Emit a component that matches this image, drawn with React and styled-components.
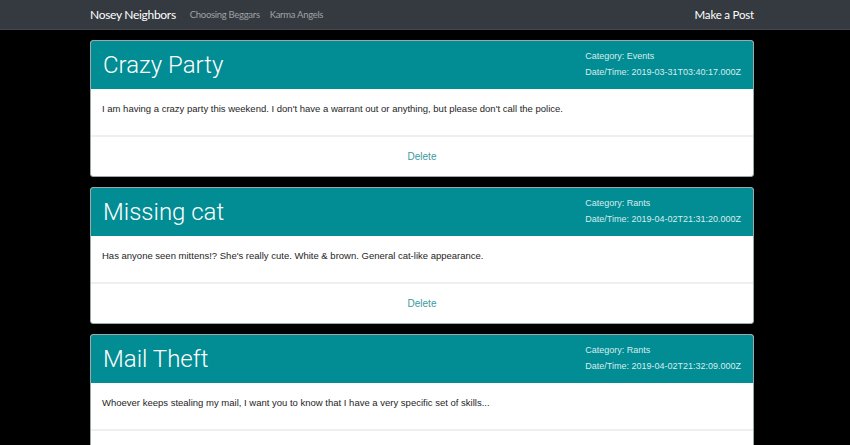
import React from 'react';
import styled, { createGlobalStyle } from 'styled-components';

const GlobalStyle = createGlobalStyle`
  html, body {
    margin: 0;
    padding: 0;
    background: #000;
    font-family: "Liberation Sans", Arial, sans-serif;
  }
`;

const Navbar = styled.nav`
  height: 30px;
  background: #343a40;
  border-bottom: 1px solid #45494f;
  box-sizing: border-box;
`;

const NavInner = styled.div`
  width: 664px;
  margin: 0 96px 0 90px;
  height: 100%;
  display: flex;
  align-items: center;
  font-family: Lato, "Open Sans", sans-serif;
`;

const Brand = styled.a`
  color: #fff;
  font-size: 12px;
  margin-right: 14px;
  letter-spacing: -0.3px;
`;

const NavLink = styled.a`
  color: #9ea2a7;
  font-size: 9.5px;
  margin-right: 10px;
  letter-spacing: -0.3px;
`;

const NavRight = styled.a`
  margin-left: auto;
  color: #fff;
  font-size: 11.5px;
  letter-spacing: -0.2px;
`;

const Container = styled.main`
  width: 664px;
  margin: 0 96px 0 90px;
  padding-top: 10px;
  display: flex;
  flex-direction: column;
  gap: 10px;
`;

const Card = styled.div`
  background: #fff;
  border-radius: 3px;
  overflow: hidden;
  border: 1px solid #9aa;
  box-sizing: border-box;
`;

const CardHeader = styled.div`
  background: #028c93;
  height: 48px;
  display: flex;
  align-items: center;
  justify-content: space-between;
  padding: 0 12px;
`;

const Title = styled.h2`
  margin: 0;
  color: #fff;
  font-weight: 300;
  font-size: 24px;
  font-family: Roboto, "Liberation Sans", sans-serif;
`;

const Meta = styled.div`
  color: #d6eced;
  font-size: 9px;
  line-height: 16px;
  align-self: flex-start;
  padding-top: 7px;
`;

const CardBody = styled.div`
  height: 48px;
  padding: 14px 11px 0;
  box-sizing: border-box;
  font-size: 9.5px;
  color: #1e1e1e;
  border-bottom: 2px solid #efefef;
`;

const CardFooter = styled.div`
  height: 39px;
  display: flex;
  align-items: center;
  justify-content: center;
`;

const DeleteButton = styled.button`
  background: none;
  border: none;
  color: #3a9aa2;
  font-size: 10px;
  font-family: inherit;
  cursor: pointer;
  padding: 0;
`;

const posts = [
  {
    id: 1,
    title: 'Crazy Party',
    category: 'Events',
    date: '2019-03-31T03:40:17.000Z',
    body: "I am having a crazy party this weekend. I don't have a warrant out or anything, but please don't call the police.",
  },
  {
    id: 2,
    title: 'Missing cat',
    category: 'Rants',
    date: '2019-04-02T21:31:20.000Z',
    body: "Has anyone seen mittens!? She's really cute. White & brown. General cat-like appearance.",
  },
  {
    id: 3,
    title: 'Mail Theft',
    category: 'Rants',
    date: '2019-04-02T21:32:09.000Z',
    body: 'Whoever keeps stealing my mail, I want you to know that I have a very specific set of skills...',
  },
];

const Post = ({ post }) => (
  <Card>
    <CardHeader>
      <Title>{post.title}</Title>
      <Meta>
        <div>Category: {post.category}</div>
        <div>Date/Time: {post.date}</div>
      </Meta>
    </CardHeader>
    <CardBody>{post.body}</CardBody>
    <CardFooter>
      <DeleteButton>Delete</DeleteButton>
    </CardFooter>
  </Card>
);

const App = () => (
  <>
    <GlobalStyle />
    <Navbar>
      <NavInner>
        <Brand>Nosey Neighbors</Brand>
        <NavLink>Choosing Beggars</NavLink>
        <NavLink>Karma Angels</NavLink>
        <NavRight>Make a Post</NavRight>
      </NavInner>
    </Navbar>
    <Container>
      {posts.map((p) => (
        <Post key={p.id} post={p} />
      ))}
    </Container>
  </>
);

export default App;
